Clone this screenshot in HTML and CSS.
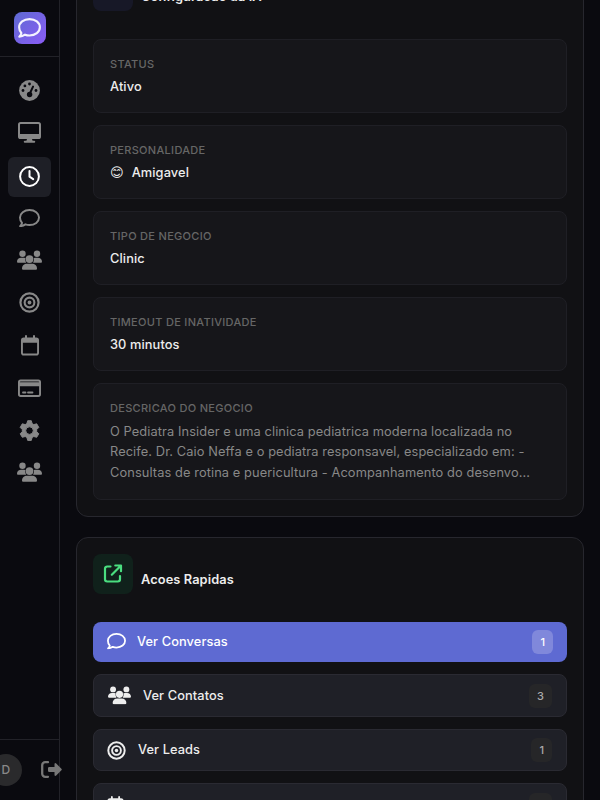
FILE: index.html
```
<!DOCTYPE html>
<html lang="pt-BR">
<head>
<meta charset="utf-8">
<title>Painel</title>
<link rel="stylesheet" href="styles.css">
</head>
<body>
<svg class="sprite" aria-hidden="true">
  <symbol id="comment" viewBox="0 0 512 448">
    <path class="line" d="M256 24c130 0 232 80 232 184S386 392 256 392c-36 0-70-6-100-18-30 20-76 42-128 44 26-26 42-54 46-80C42 304 24 258 24 208 24 104 126 24 256 24z" stroke-width="48" stroke-linejoin="round"/>
  </symbol>
  <symbol id="users" viewBox="0 0 25 20">
    <circle cx="5.500" cy="3.700" r="3.200"/><circle cx="20" cy="3.700" r="3.200"/>
    <path d="M0 11.800c0-2.600 1.800-4.100 4.300-4.100h2.400q1 0 1.700.3a5 5 0 0 0 .7 4.700H.9q-.9 0-.9-.9zM25 11.800c0-2.600-1.800-4.100-4.300-4.100h-2.200q-1 0-1.700.3a5 5 0 0 1-.7 4.700h8q.9 0 .9-.9z"/>
    <circle cx="12.500" cy="9.100" r="3.900"/>
    <path d="M5 18.600c0-3 2.200-4.900 5-4.900h5c2.800 0 5 1.900 5 4.900q0 1.200-1.100 1.200H6.100Q5 19.800 5 18.600z"/>
  </symbol>
  <symbol id="target" viewBox="0 0 22 22">
    <circle class="line" cx="11" cy="11" r="9.500" stroke-width="2.300"/><circle class="line" cx="11" cy="11" r="5.100" stroke-width="2.200"/>
    <circle cx="11" cy="11" r="2"/>
  </symbol>
  <symbol id="calendar" viewBox="0 0 18 21">
    <path fill-rule="evenodd" d="M4 1a1 1 0 0 1 2 0v1.500h6V1a1 1 0 0 1 2 0v1.500h1.200A2.800 2.800 0 0 1 18 5.300v12.400a2.800 2.800 0 0 1-2.800 2.800H2.800A2.800 2.800 0 0 1 0 17.700V5.300a2.800 2.800 0 0 1 2.800-2.800H4zM1.900 7.700v10q0 .9.900.9h12.400q.9 0 .9-.9v-10z"/>
  </symbol>
</svg>
<div class="app">
  <aside class="sidebar">
    <div class="brand"><div class="logo"><svg width="23" height="20"><use href="#comment"/></svg></div></div>
    <nav class="nav">
      <a class="nav-item"><svg width="25" height="24" viewBox="0 0 25 24"><mask id="dial"><rect width="25" height="24" fill="#fff"/><g fill="#000"><circle cx="12.500" cy="6" r="1.400"/><circle cx="7.900" cy="7.900" r="1.400"/><circle cx="6" cy="12.500" r="1.400"/><circle cx="19" cy="12.500" r="1.400"/><circle cx="12.600" cy="16.500" r="2.700"/></g><path d="M12.600 16l3.500-7.500" stroke="#000" stroke-width="1.900" stroke-linecap="round"/></mask><circle cx="12.500" cy="12.500" r="10.400" mask="url(#dial)"/></svg></a>
      <a class="nav-item"><svg width="25" height="24" viewBox="0 0 25 24"><path fill-rule="evenodd" d="M3.600 2h17.800A2.600 2.600 0 0 1 24 4.600v11.800a2.600 2.600 0 0 1-2.600 2.600H15l.6 1.700h1.600a1 1 0 0 1 0 2.100H7.800a1 1 0 0 1 0-2.100h1.600L10 19H3.600A2.600 2.600 0 0 1 1 16.400V4.600A2.600 2.600 0 0 1 3.600 2zm0 2.100q-.6 0-.6.6v9.300h19V4.700q0-.6-.6-.6z"/></svg></a>
      <a class="nav-item active"><svg width="25" height="24" viewBox="0 0 25 24" stroke-width="2"><circle class="line" cx="12.500" cy="11.500" r="9.400"/><path class="line" d="M12.500 6v5.700l3.700 2.500" stroke-linecap="round" stroke-linejoin="round"/></svg></a>
      <a class="nav-item"><svg width="21" height="18.400"><use href="#comment"/></svg></a>
      <a class="nav-item"><svg width="25" height="20"><use href="#users"/></svg></a>
      <a class="nav-item"><svg width="21" height="21"><use href="#target"/></svg></a>
      <a class="nav-item calendar-item"><svg width="18" height="21"><use href="#calendar"/></svg></a>
      <a class="nav-item card-item"><svg width="25" height="24" viewBox="0 0 25 24"><path fill-rule="evenodd" d="M3.600 3.500h17.800A2.600 2.600 0 0 1 24 6.100v12.200a2.600 2.600 0 0 1-2.600 2.600H3.600A2.600 2.600 0 0 1 1 18.300V6.100a2.600 2.600 0 0 1 2.600-2.600zm0 1.900q-.7 0-.7.9h19.200q0-.9-.7-.9zM2.900 10.300v8q0 .7.700.7h17.800q.7 0 .7-.7v-8z"/><path d="M6 16.500h2.500M11 16.500h4.500" stroke="currentColor" stroke-width="1.800" stroke-linecap="round"/></svg></a>
      <a class="nav-item"><svg width="25" height="24" viewBox="0 0 25 24"><path fill-rule="evenodd" d="M10.700 2.700h3.600l.8 2.900 1.700 1 2.900-.8 2.100 3.600-2.100 2.200v2l2.100 2.200-2.100 3.500-2.900-.8-1.700 1-.8 2.900h-3.600l-.8-2.900-1.700-1-2.900.8-2.100-3.500 2.100-2.200v-2L3.200 9.400l2.100-3.600 2.900.8 1.700-1zM12.500 8.800a3.800 3.800 0 1 0 0 7.600 3.800 3.800 0 0 0 0-7.600z" stroke="currentColor" stroke-width="1" stroke-linejoin="round"/></svg></a>
      <a class="nav-item"><svg width="25" height="20"><use href="#users"/></svg></a>
    </nav>
    <div class="account">
      <div class="avatar">D</div>
      <svg class="logout" width="21" height="17" viewBox="0 0 21 17"><path class="line" d="M7 1.200H4.200a3 3 0 0 0-3 3v8.600a3 3 0 0 0 3 3H7" stroke-width="2.300" stroke-linecap="round"/><path d="M20.400 7.700l-5.200-5.200q-1.400-1-1.700.6v2.800H8.300Q7 5.900 7 7.200v2.600q0 1.300 1.300 1.300h5.200v2.800q.3 1.600 1.700.6l5.200-5.200q.8-.8 0-1.600z"/></svg>
    </div>
  </aside>
  <main class="main">
    <section class="panel">
      <header class="panel-head"><div class="tile tile-blue"></div><h2>Configuracao da IA</h2></header>
      <div class="stack">
        <div class="field"><span class="label">Status</span><strong>Ativo</strong></div>
        <div class="field"><span class="label">Personalidade</span><strong><span class="emoji">😊</span>Amigavel</strong></div>
        <div class="field"><span class="label">Tipo de Negocio</span><strong>Clinic</strong></div>
        <div class="field"><span class="label">Timeout de Inatividade</span><strong>30 minutos</strong></div>
        <div class="field tall"><span class="label">Descricao do Negocio</span><p>O Pediatra Insider e uma clinica pediatrica moderna localizada no Recife. Dr. Caio Neffa e o pediatra responsavel, especializado em: - Consultas de rotina e puericultura - Acompanhamento do desenvo...</p></div>
      </div>
    </section>
    <section class="panel">
      <header class="panel-head"><div class="tile tile-green"><svg width="20" height="20" viewBox="0 0 20 20" stroke-width="2.200" stroke-linecap="round" stroke-linejoin="round"><path class="line" d="M7.500 2.500H4.200A2.200 2.200 0 0 0 2 4.700v10.600a2.200 2.200 0 0 0 2.200 2.200h10.600a2.200 2.200 0 0 0 2.200-2.200V12M12.300 1.500H18v5.700M17.500 2L8.800 10.700"/></svg></div><h2>Acoes Rapidas</h2></header>
      <div class="stack">
        <a class="action primary"><svg width="19" height="16.600"><use href="#comment"/></svg><span>Ver Conversas</span><b>1</b></a>
        <a class="action wide"><svg width="23" height="18.400"><use href="#users"/></svg><span>Ver Contatos</span><b>3</b></a>
        <a class="action"><svg width="19" height="19"><use href="#target"/></svg><span>Ver Leads</span><b>1</b></a>
        <a class="action wide last"><svg width="17" height="19"><use href="#calendar"/></svg><span>Ver Agendamentos</span><b>0</b></a>
      </div>
    </section>
  </main>
</div>
</body>
</html>
```
FILE: styles.css
```
* { box-sizing: border-box; }
html, body { height: 100%; }
body { margin: 0; overflow: hidden; background: #0a0a0f; color: #ededed; font: 12.8px/20px Inter, "Liberation Sans", sans-serif; letter-spacing: .1px; }
svg { display: block; flex: none; fill: currentColor; }
.line { fill: none; stroke: currentColor; }
.sprite { display: none; }
.app { display: flex; height: 800px; }
.sidebar { width: 60px; flex: none; display: flex; flex-direction: column; border-right: 1px solid #222228; color: #888; }
.brand { height: 57px; display: flex; justify-content: center; align-items: center; border-bottom: 1px solid #222228; }
.logo { width: 32px; height: 32px; border-radius: 8px; margin-left: 1px; padding-right: 2px; display: flex; align-items: center; justify-content: center; background: linear-gradient(135deg, #5e6ad2, #8b5cf6); color: #f4f2ff; }
.nav { flex: 1; display: flex; flex-direction: column; gap: 2px; padding: 13px 8px 0; }
.nav-item { height: 40px; display: flex; align-items: center; justify-content: center; border-radius: 6px; }
.nav-item.active { background: #1e1f26; color: #fff; margin: 3px 0 -1px; }
.nav-item.calendar-item { margin-top: 1px; }
.nav-item.card-item { margin-top: 1px; }
.account { height: 61px; flex: none; display: flex; align-items: center; justify-content: flex-end; gap: 19px; border-top: 1px solid #222228; padding-bottom: 1px; }
.avatar { width: 32px; height: 32px; flex: none; border-radius: 50%; background: #2a2a2c; color: #888; font-size: 12px; font-weight: 500; display: flex; align-items: center; justify-content: center; }
.logout { color: #777; margin-right: -3px; }
.main { flex: 1; height: 800px; overflow: hidden; padding: 0 16px; display: flex; flex-direction: column; gap: 20px; }
.panel { flex: none; border: 1px solid #27272e; border-radius: 12px; padding: 16px; background: #111114; }
.panel:first-child { margin-top: -46px; }
.panel-head { height: 40px; margin-bottom: 28px; display: flex; align-items: center; gap: 8px; }
.tile { width: 40px; height: 40px; border-radius: 8px; display: flex; align-items: center; justify-content: center; }
.tile-blue { background: #171827; }
.tile-green { background: #10211b; color: #4ade80; }
h2 { margin: 11px 0 0; font-size: inherit; line-height: 20px; font-weight: 600; }
.stack { display: flex; flex-direction: column; gap: 12px; }
.field { height: 74px; padding: 16px; background: #16161a; border: 1px solid #1f1f25; border-radius: 8px; }
.field.tall { height: 117px; }
.label { display: block; margin-bottom: 5px; color: #666; font-size: 11px; line-height: 16px; font-weight: 500; letter-spacing: .3px; text-transform: uppercase; }
strong { display: block; font-weight: 500; line-height: 20px; }
.emoji { font-family: "DejaVu Sans", sans-serif; font-size: 13px; font-weight: 400; margin-right: 8px; }
p { margin: 6px 0 0; color: #888; line-height: 20.480px; }
.action { height: 42px; flex: none; display: flex; align-items: center; padding: 0 14px 0 13px; border: 1px solid #2a2a32; border-radius: 8px; background: #1f2027; font-weight: 500; }
.action.wide { height: 43px; padding-left: 14px; }
.action.last { height: 44px; padding-left: 13px; }
.action.primary { height: 40px; padding-left: 14px; border: 0; background: #5e6ad2; color: #fff; }
.action span { margin-left: 12px; }
.action.primary span { margin-left: 11px; }
.action.primary svg { margin-bottom: 1px; }
.action.last span { padding-top: 4px; }
.action b { height: 24px; margin-left: auto; padding: 0 8px; border-radius: 6px; background: #262628; color: #aaa; font-size: 11px; font-weight: 500; line-height: 24px; letter-spacing: 0; }
.action.primary b { background: #8088db; color: #fff; }
```
